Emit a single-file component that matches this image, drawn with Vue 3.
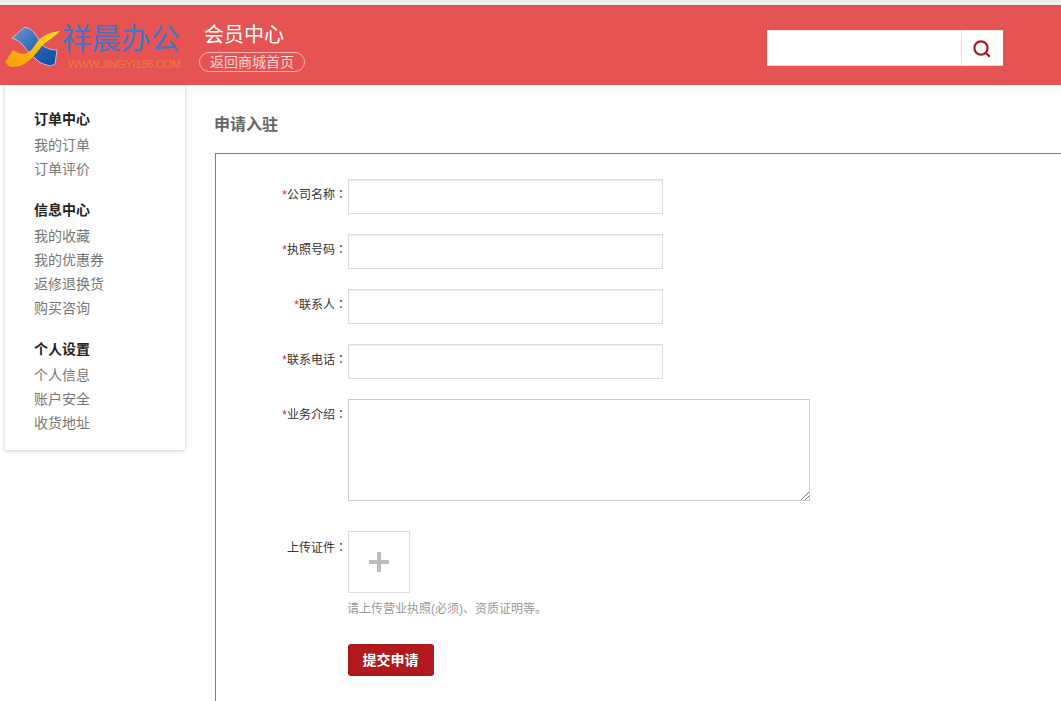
<script setup>
const groups = [
  { title: '订单中心', items: ['我的订单', '订单评价'] },
  { title: '信息中心', items: ['我的收藏', '我的优惠券', '返修退换货', '购买咨询'] },
  { title: '个人设置', items: ['个人信息', '账户安全', '收货地址'] },
]
const fields = [
  { label: '公司名称' },
  { label: '执照号码' },
  { label: '联系人' },
  { label: '联系电话' },
]
</script>

<template>
  <div class="page">
    <header class="header">
      <div class="logo">
        <svg class="mark" width="66" height="50" viewBox="0 0 66 50">
          <defs>
            <linearGradient id="blueA" x1="0" y1="0" x2="1" y2="1">
              <stop offset="0" stop-color="#7096cc" />
              <stop offset="0.55" stop-color="#2a63b4" />
              <stop offset="1" stop-color="#0b4aa6" />
            </linearGradient>
            <linearGradient id="gold" x1="0" y1="1" x2="1" y2="0">
              <stop offset="0" stop-color="#f39a10" />
              <stop offset="0.45" stop-color="#fbb80f" />
              <stop offset="1" stop-color="#ffe020" />
            </linearGradient>
          </defs>
          <path d="M12 16 L24 5.5 C30 5 35 10 40 20 C44 26 50 28 57 28 L55 42 C52 44 49 44 47 43 C42 42 39 40 37 38 C34 35 32 34 30 32 L22 22 C19 19 15 17 12 16Z" fill="url(#blueA)" stroke="#d8d4dc" stroke-width=".8" />
          <path d="M60 9 C56 14 48 18 42 24 C37 30 33 36 27 40 C22 44 17 45 12 45 C9 45 7 43 5 40 C8 36 10 32 13 28 C17 31 22 33 27 31 C31 29 34 25 37 20 C43 13 51 10 60 9Z" fill="url(#gold)" />
        </svg>
        <div class="brand">
          <div class="brand-name">祥晨办公</div>
          <div class="brand-url">WWW.JINGYI186.COM</div>
        </div>
      </div>
      <div class="member">
        <div class="member-title">会员中心</div>
        <a class="back">返回商城首页</a>
      </div>
      <div class="search">
        <div class="search-input"></div>
        <div class="search-btn">
          <svg class="search-icon" width="18" height="18" viewBox="0 0 18 18" fill="none" stroke="#a81a1a" stroke-width="2.2">
            <circle cx="8" cy="8" r="6.6" />
            <path d="M12.5 12.5 L16.8 16.8" />
          </svg>
        </div>
      </div>
    </header>

    <div class="main">
      <aside class="sidebar">
        <section v-for="g in groups" :key="g.title" class="group">
          <h3 class="group-title">{{ g.title }}</h3>
          <a v-for="i in g.items" :key="i" class="group-item">{{ i }}</a>
        </section>
      </aside>

      <div class="content">
        <h2 class="heading">申请入驻</h2>
        <div class="box">
          <div v-for="f in fields" :key="f.label" class="row">
            <label class="label"><i>*</i>{{ f.label }}<span class="colon">：</span></label>
            <div class="input"></div>
          </div>
          <div class="row row-area">
            <label class="label"><i>*</i>业务介绍<span class="colon">：</span></label>
            <div class="textarea">
              <svg class="grip" width="9" height="9" viewBox="0 0 9 9" stroke="#777" stroke-width="1">
                <path d="M1 9 L9 1 M5 9 L9 5" />
              </svg>
            </div>
          </div>
          <div class="row row-upload">
            <label class="label">上传证件<span class="colon">：</span></label>
            <div class="upload-col">
              <div class="upload"><span class="plus"></span></div>
              <p class="hint">请上传营业执照(必须)、资质证明等。</p>
              <button class="submit">提交申请</button>
            </div>
          </div>
        </div>
      </div>
    </div>
  </div>
</template>

<style>
html, body { margin: 0; overflow: hidden; background: #fff; }
</style>

<style scoped>
.page {
  width: 1061px;
  height: 701px;
  overflow: hidden;
  background: #fff;
  font-family: "Liberation Sans", "Noto Sans CJK SC", sans-serif;
  border-top: 5px solid #eceeec;
  box-sizing: border-box;
}
.header {
  height: 80px;
  background: #e55353;
  display: flex;
  align-items: flex-start;
}
.logo {
  width: 199px;
  padding-top: 17px;
  box-sizing: border-box;
  display: flex;
  flex: none;
}
.mark { flex: none; }
.brand { margin: -1px 0 0 -4px; flex: none; }
.brand-name {
  font-size: 29.5px;
  line-height: 36px;
  font-weight: 400;
  color: #4474c4;
  white-space: nowrap;
}
.brand-url {
  font-size: 11.5px;
  line-height: 14px;
  color: #ee7a3e;
  margin-left: 6px;
  white-space: nowrap;
  letter-spacing: -0.5px;
}
.member { padding-top: 17px; flex: none; width: 568px; box-sizing: border-box; }
.member-title {
  font-size: 20px;
  line-height: 26px;
  color: #fff;
  padding-left: 5px;
}
.back {
  display: block;
  width: 106px;
  height: 20px;
  margin-top: 4px;
  border: 1px solid #f2b3b3;
  border-radius: 11px;
  box-sizing: border-box;
  font-size: 14px;
  line-height: 19px;
  text-align: center;
  color: #f7d6d6;
}
.search {
  display: flex;
  margin-top: 25px;
  width: 236px;
  height: 36px;
  background: #fff;
  border-top: 1px solid #e6e6e6;
  border-bottom: 1px solid #e0e0e0;
  box-sizing: border-box;
  flex: none;
}
.search-input { width: 194px; border-right: 1px solid #ddd; }
.search-btn {
  flex: 1;
  display: flex;
  align-items: center;
  justify-content: center;
}
.search-icon { margin: 2px 2px 0 0; }
.main { display: flex; align-items: flex-start; }
.sidebar {
  width: 180px;
  height: 365px;
  margin-left: 5px;
  padding: 23px 0 0 29px;
  box-sizing: border-box;
  box-shadow: 0 1px 4px rgba(0, 0, 0, 0.22);
  flex: none;
}
.group { margin-bottom: 18px; }
.group-title {
  margin: 0 0 3px;
  font-size: 14px;
  line-height: 22px;
  font-weight: 700;
  color: #222;
}
.group-item {
  display: block;
  font-size: 14px;
  line-height: 24px;
  color: #777;
}
.content { margin-left: 30px; flex: none; width: 846px; }
.heading {
  margin: 29px 0 17px -1px;
  font-size: 16px;
  line-height: 22px;
  font-weight: 700;
  color: #666;
}
.box {
  border: 1px solid #e55353;
  border-right: 0;
  height: 600px;
  box-sizing: border-box;
  padding-top: 25px;
}
.row { display: flex; margin-bottom: 20px; }
.label {
  width: 131px;
  margin-right: 1px;
  flex: none;
  text-align: right;
  font-size: 12px;
  line-height: 30px;
  color: #333;
  white-space: nowrap;
}
.label i { font-style: normal; color: #d9232d; }
.colon { font-family: "Noto Sans CJK TC", sans-serif; }
.input {
  width: 315px;
  height: 35px;
  border: 1px solid #ddd;
  box-sizing: border-box;
  box-shadow: inset 0 1px 1px #eee;
}
.row-area { margin-bottom: 30px; }
.textarea {
  position: relative;
  width: 462px;
  height: 102px;
  border: 1px solid #ccc;
  box-sizing: border-box;
}
.grip { position: absolute; right: 0; bottom: 0; }
.upload {
  width: 62px;
  height: 62px;
  border: 1px solid #ddd;
  box-sizing: border-box;
  display: flex;
  align-items: center;
  justify-content: center;
}
.plus {
  display: block;
  width: 20px;
  height: 20px;
  background:
    linear-gradient(#bdbdbd, #bdbdbd) center / 20px 4px no-repeat,
    linear-gradient(#bdbdbd, #bdbdbd) center / 4px 20px no-repeat;
}
.row-upload .label { line-height: 32px; }
.hint {
  margin: 8px 0 0 -1px;
  font-size: 12px;
  line-height: 16px;
  color: #999;
  white-space: nowrap;
}
.submit {
  display: block;
  margin-top: 27px;
  width: 86px;
  height: 32px;
  border: 0;
  padding: 0 1px 2px 0;
  border-radius: 3px;
  background: #b01a1c;
  color: #fff;
  font-family: inherit;
  font-size: 14px;
  font-weight: 700;
}
</style>
